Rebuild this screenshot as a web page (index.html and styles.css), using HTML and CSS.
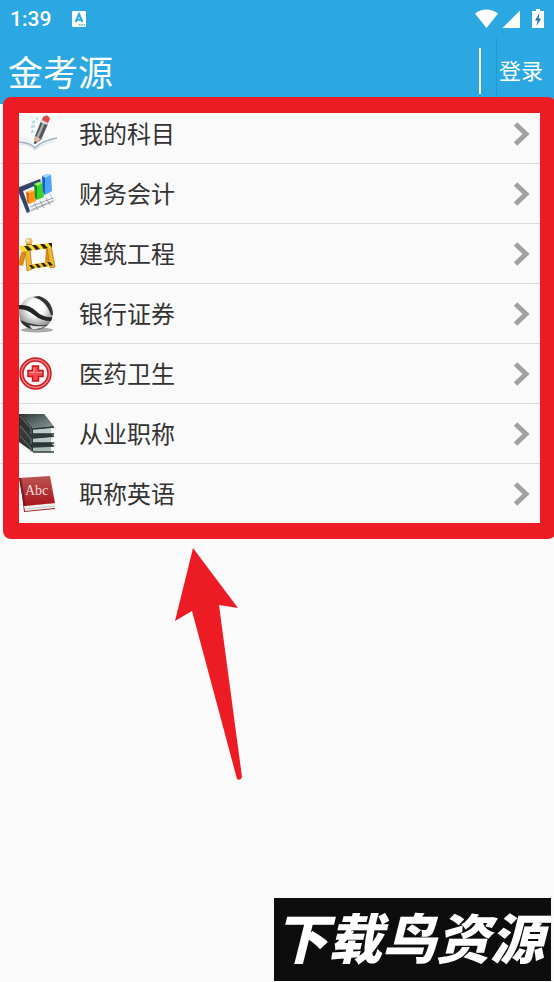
FILE: index.html
```html
<!DOCTYPE html>
<html lang="zh-CN">
<head>
<meta charset="utf-8">
<meta name="viewport" content="width=device-width, initial-scale=1">
<title>金考源</title>
<link rel="stylesheet" href="styles.css">
</head>
<body>
<header class="top">
  <div class="status">
    <span class="clock">1:39</span>
    <svg class="keyboard" width="16" height="16" viewBox="0 0 16 16" aria-hidden="true">
      <rect x="1" width="14" height="16" rx="1" fill="#fff"/>
      <path d="M4.600 11 8 3l3.400 8M5.600 8.800h4.800" fill="none" stroke="#2ba8e2" stroke-width="2"/>
      <path d="M8 13.800h6" stroke="#2ba8e2" stroke-width="1.200" stroke-dasharray="1.500 .8"/>
    </svg>
    <svg class="signals" width="72" height="20" viewBox="0 0 72 20" aria-hidden="true">
      <path d="M1 4.500C8-1 17-1 24 4.500L12.500 19z" fill="#fff"/>
      <path d="M46 1.500V19H28.500z" fill="#fff"/>
      <path d="M59 2h3V0h4v2h4v17H58V2z" fill="#fff"/>
      <path d="M65.500 4 61 11.500h2.600L62.500 17l4.700-7.500h-2.600z" fill="#2478a5"/>
    </svg>
  </div>
  <div class="bar">
    <h1 class="title">金考源</h1>
    <span class="rule"></span>
    <button class="login" type="button">登录</button>
  </div>
</header>

<main class="content">
  <nav class="subjects" aria-label="科目">
    <a class="row" href="#mine">
      <svg class="icon" viewBox="0 0 40 40" aria-hidden="true">
        <path d="M2 25 10 23 19 31 39 24 40 25 19 35 2 29z" fill="#f1f4f6"/>
        <path d="M2 28Q14 29 18 34 24 27 40 24" fill="none" stroke="#9db1c0" stroke-width="1.500"/>
        <path d="M2 30Q13 31 18 36 25 30 38 27" fill="none" stroke="#dbe2e8"/>
        <path d="m24 7 7 3-7 16-7 4 1-8z" fill="#55585c"/>
        <path d="m26 8 2 1-7 16-2-1z" fill="#adb0b3"/>
        <path d="m18 22 6 3-7 5z" fill="#dfb69a"/><path d="m18 27-1 3 3-1z" fill="#333"/>
        <path d="m25 4 7 3-2 4-7-3z" fill="#d9dadd"/>
        <path d="m26 3q5-4 7 2l-2 4-6-3z" fill="#dd4943"/>
        <path d="m15 9 3-2M14 13l4-1M14 18l3-1M19 5l2-1" stroke="#b5dbeb" stroke-width="2.500"/>
      </svg>
      <span class="label">我的科目</span>
      <svg class="chevron" viewBox="0 0 18 26" aria-hidden="true"><path d="m2.500 3 10.500 10L2.500 23"/></svg>
    </a>
    <a class="row" href="#finance">
      <svg class="icon" viewBox="0 0 40 40" aria-hidden="true">
        <path d="m0 14 24-9 13 22L10 39z" fill="#f6f7fb" stroke="#aeb3c2" stroke-width=".7"/>
        <path d="m0 14 23-9 1 4L6 17l7 20-3 2z" fill="#344469"/>
        <path d="M13 33l23-9M14 36l22-9M17 29l4 7M23 27l4 7M29 24l4 7" stroke="#858b9a" stroke-width=".8"/>
        <path d="m9 18 5-2 4 1 1 10-7 3z" fill="#ff9318"/><path d="m9 18 5-2 4 1-6 2z" fill="#ffc35e"/><path d="m9 18 3 1v11l-2-2z" fill="#df6812"/>
        <path d="m17 10 5-2 4 1 1 14-7 3z" fill="#39d32f"/><path d="m17 10 5-2 4 1-6 3z" fill="#96ee79"/><path d="m17 10 3 2v14l-2-2z" fill="#12921b"/>
        <path d="m25 2 5-2 4 1 1 16-7 4z" fill="#4ba2ff"/><path d="m25 2 5-2 4 1-6 3z" fill="#a3d6ff"/><path d="m25 2 3 2v17l-2-3z" fill="#1760cb"/>
      </svg>
      <span class="label">财务会计</span>
      <svg class="chevron" viewBox="0 0 18 26" aria-hidden="true"><path d="m2.500 3 10.500 10L2.500 23"/></svg>
    </a>
    <a class="row" href="#building">
      <svg class="icon" viewBox="0 0 40 40" aria-hidden="true">
        <circle cx="12" cy="7.500" r="3.500" fill="#e7b95c"/><circle cx="11" cy="6.500" r="1.500" fill="#fff0bb"/><path d="M9 10h6v3H9z" fill="#8f6d36"/>
        <path d="m5 15 5 1-4 16-5-1zM29 13l4-1-1 19-4-1z" fill="#d78c1d"/>
        <path d="m8 15 5-1 2 21-5 2zM30 12l4-1 4 22-5 1z" fill="#f1b62c" stroke="#a87118" stroke-width=".7"/>
        <path d="m3 12 31-3 1 5-31 4z" fill="#ffd82e"/>
        <path d="m7 12 4 5 4-1-4-4zM15 11l4 5 4-1-4-4zM23 10l4 5 4-1-4-4zM31 9l4 5V9z" fill="#292611"/>
        <path d="m10 31 26-4 1 5-26 3z" fill="#eebf26"/>
        <path d="m12 31 3 4 3-1-3-3zM18 30l3 4 3-1-3-3zM24 29l3 4 3-1-3-3zM30 28l3 4 3-1-3-3z" fill="#292611"/>
      </svg>
      <span class="label">建筑工程</span>
      <svg class="chevron" viewBox="0 0 18 26" aria-hidden="true"><path d="m2.500 3 10.500 10L2.500 23"/></svg>
    </a>
    <a class="row" href="#bank">
      <svg class="icon" viewBox="0 0 40 40" aria-hidden="true">
        <defs><radialGradient id="ball" cx=".5" cy=".35" r=".65"><stop offset=".35" stop-color="#fff"/><stop offset="1" stop-color="#777"/></radialGradient></defs>
        <ellipse cx="20" cy="36" rx="16" ry="2.500" fill="#aaa"/>
        <circle cx="19" cy="19" r="17" fill="url(#ball)"/>
        <path d="M2 11Q12 10 19 17T35 23L34 27Q24 27 17 21T2 15z" fill="#242424"/>
        <path d="M16 3Q29 6 34 21L36 21Q35 6 22 2z" fill="#343434"/>
        <path d="M3 26Q11 30 20 31T31 30Q27 35 19 35 7 35 3 26z" fill="#303030"/>
        <path d="M12 31q8 2 17 1-7 4-14 3z" fill="#ddd"/>
      </svg>
      <span class="label">银行证券</span>
      <svg class="chevron" viewBox="0 0 18 26" aria-hidden="true"><path d="m2.500 3 10.500 10L2.500 23"/></svg>
    </a>
    <a class="row" href="#medical">
      <svg class="icon" viewBox="0 0 40 40" aria-hidden="true">
        <circle cx="18.500" cy="19.500" r="14" fill="#fff7f7" stroke="#c91f25" stroke-width="4.500"/>
        <circle cx="18.500" cy="19.500" r="14" fill="none" stroke="#f27a7c" stroke-width="1.500"/>
        <path d="M15.500 12h6v4.500H26v6h-4.500V27h-6v-4.500H11v-6h4.500z" fill="#f54a4e" stroke="#c9141b" stroke-width="1.500"/>
        <path d="M17 13.500v5h-4.500M18.500 18.500H25" fill="none" stroke="#ffaaa9"/>
      </svg>
      <span class="label">医药卫生</span>
      <svg class="chevron" viewBox="0 0 18 26" aria-hidden="true"><path d="m2.500 3 10.500 10L2.500 23"/></svg>
    </a>
    <a class="row" href="#titles">
      <svg class="icon" viewBox="0 0 40 40" aria-hidden="true">
        <defs><linearGradient id="cover" x2="1" y2="1"><stop stop-color="#303736"/><stop offset="1" stop-color="#899f9d"/></linearGradient></defs>
        <path d="M2 19h22l13 13-21 2v4L2 28z" fill="#2d3434"/><path d="m16 33 18-1v6H16z" fill="#a8b8b5"/><path d="M16 33 37 32M16 38h21" stroke="#333d3c" stroke-width="1.500"/>
        <path d="M2 10h22l13 13-21 2v4L2 20z" fill="#343b3b"/><path d="m16 24 18-1v6H16z" fill="#b8c6c3"/><path d="M16 24 37 22M16 29h21" stroke="#2a3333" stroke-width="1.500"/>
        <path d="M1 0h26l10 13-21 3v4L2 11z" fill="#2d3333"/><path d="M3 0h24l10 13-21 2z" fill="url(#cover)"/><path d="m16 15 18-1v6H16z" fill="#bdcbc8"/><path d="M16 15 37 13M16 20h21" stroke="#2a3333" stroke-width="1.500"/>
        <path d="m3 2 11 13v5M3 12l11 13v5M3 22l11 12v4" fill="none" stroke="#717a79"/>
      </svg>
      <span class="label">从业职称</span>
      <svg class="chevron" viewBox="0 0 18 26" aria-hidden="true"><path d="m2.500 3 10.500 10L2.500 23"/></svg>
    </a>
    <a class="row" href="#english">
      <svg class="icon" viewBox="0 0 40 40" aria-hidden="true">
        <defs><linearGradient id="red" x2="0" y2="1"><stop stop-color="#ba5552"/><stop offset="1" stop-color="#a9141c"/></linearGradient></defs>
        <path d="m3 4 4 34 31-3v-6L8 32z" fill="#902327"/><path d="m7 32 31-3v5L8 37z" fill="#f1eeee"/><path d="m8 35 30-3" stroke="#bbb" stroke-width=".7"/>
        <path d="m2 4 31-2 5 27-31 3z" fill="url(#red)"/><path d="m2 4 2 0 5 28-2 0z" fill="#7b1b20"/>
        <text class="abc" x="8" y="21">Abc</text>
      </svg>
      <span class="label">职称英语</span>
      <svg class="chevron" viewBox="0 0 18 26" aria-hidden="true"><path d="m2.500 3 10.500 10L2.500 23"/></svg>
    </a>
    <span class="frame"></span>
    <svg class="arrow" width="68" height="234" viewBox="0 0 68 234" aria-hidden="true">
      <path d="M18 0 63 60 44 57 67 229Q66 233 62 231L17 63 0 73z" fill="#ed1c24"/>
    </svg>
  </nav>
</main>

<footer class="foot"><div class="brand">下载鸟资源</div></footer>
</body>
</html>
```
FILE: styles.css
```css
* { box-sizing: border-box; }

body {
  margin: 0;
  min-height: 100vh;
  display: flex;
  flex-direction: column;
  overflow-x: hidden;
  background: #fafafa;
  color: #333;
  font-family: Roboto, "Noto Sans CJK SC", sans-serif;
}

.top {
  background: #2ba8e2;
  color: #fff;
}

.status {
  display: flex;
  align-items: center;
  height: 38px;
  padding: 0 8px 0 10px;
}

.clock {
  font-size: 21px;
  font-weight: 500;
}

.keyboard { margin-left: 20px; }

.signals { margin-left: auto; }

.bar {
  display: flex;
  align-items: center;
  height: 66px;
  padding-left: 8px;
}

.title {
  margin: 0;
  padding-bottom: 2px;
  flex: 1;
  font-size: 35px;
  font-weight: 400;
}

.rule {
  width: 2px;
  height: 46px;
  background: #fff;
}

.login {
  align-self: stretch;
  margin-left: 15px;
  padding: 0 11px 4px 2px;
  border: 0;
  border-left: 1px solid #2597cf;
  background: none;
  color: #fff;
  font: inherit;
  font-size: 22px;
}

.content { flex: 1; }

.subjects { position: relative; }

.row {
  display: flex;
  align-items: center;
  height: 60px;
  padding: 0 23px 0 17px;
  border-bottom: 1px solid #dcdcdc;
  color: #333;
  text-decoration: none;
}

.row:last-of-type { border-bottom-color: transparent; }

.icon {
  width: 40px;
  height: 40px;
}

.label {
  flex: 1;
  margin-left: 22px;
  padding-bottom: 2px;
  font-size: 24px;
}

.chevron {
  width: 18px;
  height: 26px;
  fill: none;
  stroke: #a0a1a3;
  stroke-width: 5px;
}

.abc {
  fill: #f3dcda;
  font-family: "Liberation Serif", serif;
  font-size: 14px;
}

.frame {
  position: absolute;
  inset: -7px -2px -15px 3px;
  border: 16px solid #ed1c24;
  border-radius: 8px;
  pointer-events: none;
}

.arrow {
  position: absolute;
  top: 444px;
  left: 175px;
}

.foot {
  display: flex;
  justify-content: flex-end;
  padding: 0 3px 1px 0;
}

.brand {
  padding: 2px 7px 0 0;
  background: #0d0d0d;
  color: #fff;
  font-size: 54px;
  font-style: italic;
  font-weight: 900;
  line-height: 81px;
  white-space: nowrap;
}
```
